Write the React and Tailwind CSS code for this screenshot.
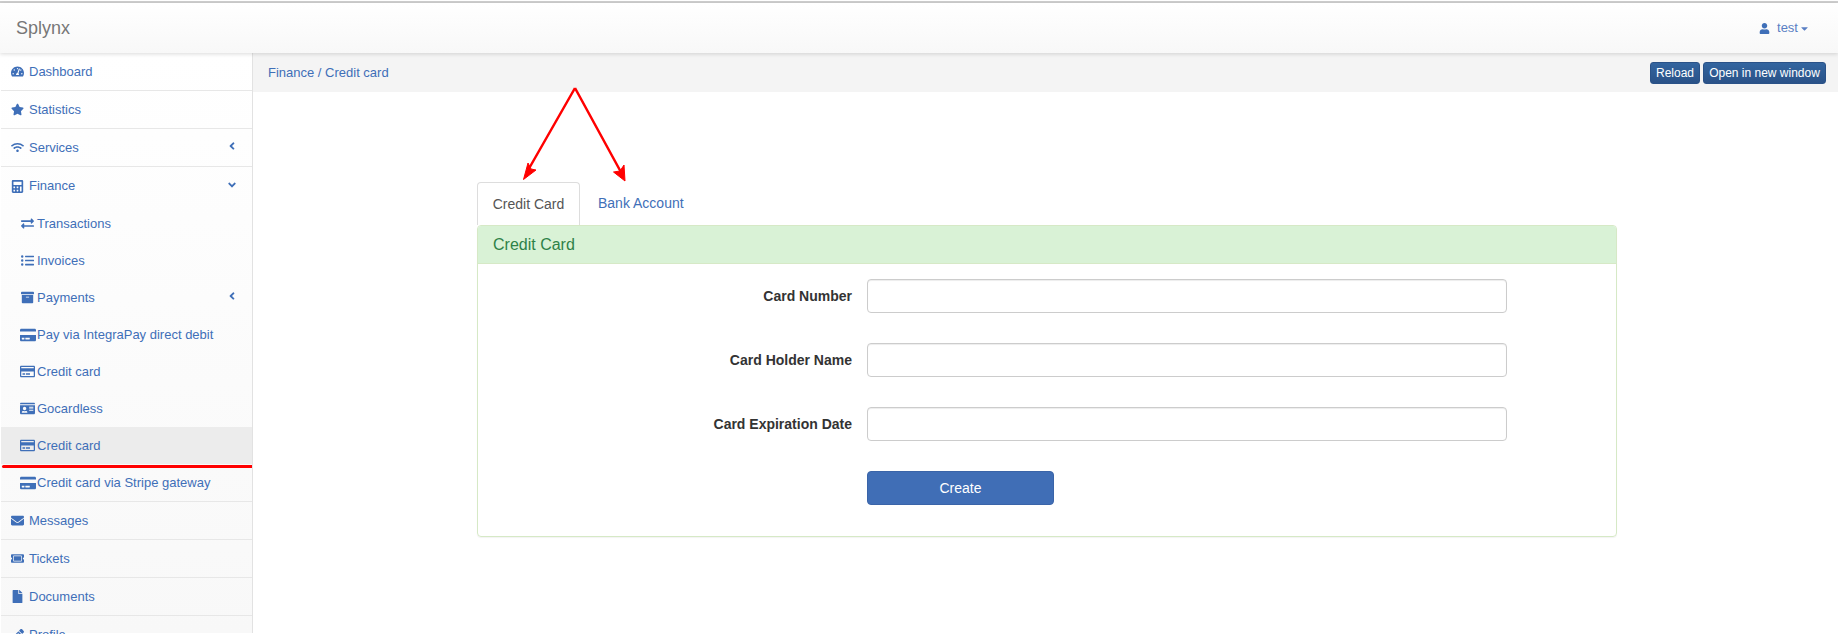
import React from "react";
import {
  FaTachometerAlt, FaStar, FaWifi, FaCalculator, FaExchangeAlt, FaListUl, FaArchive,
  FaCreditCard, FaRegCreditCard, FaIdCard, FaEnvelope, FaTicketAlt, FaFile, FaPencilAlt,
  FaUser, FaCaretDown, FaAngleLeft, FaAngleDown,
} from "react-icons/fa";

function TopRow({ icon: Icon, label, chevron, divider = true, iconSize = 13 }) {
  return (
    <div className={`h-[38px] flex items-center pl-[10px] pr-[14px] ${divider ? "border-b border-[#e7e7e7]" : ""}`}>
      <span className="w-[18px] flex justify-start shrink-0"><Icon size={iconSize} /></span>
      <span className="ml-[0px]">{label}</span>
      {chevron === "left" && <FaAngleLeft size={12} className="ml-auto mb-[3px]" />}
      {chevron === "down" && <FaAngleDown size={12} className="ml-auto mb-[3px]" />}
    </div>
  );
}

function SubRow({ icon: Icon, label, chevron, active, iconSize = 13 }) {
  return (
    <div className={`h-[37px] flex items-center pl-[17px] pr-[14px] ${active ? "bg-[#ececec]" : ""}`}>
      <span className="w-[19px] flex justify-center shrink-0"><Icon size={iconSize} /></span>
      <span>{label}</span>
      {chevron === "left" && <FaAngleLeft size={12} className="ml-auto mb-[3px]" />}
    </div>
  );
}

function Field({ label }) {
  return (
    <div className="flex items-center h-[34px] mb-[30px]">
      <label className="w-[374px] text-right font-bold text-[14px] text-[#333]">{label}</label>
      <input className="ml-[15px] w-[640px] h-[34px] border border-[#ccc] rounded-[4px] bg-white shadow-[inset_0_1px_1px_rgba(0,0,0,0.075)]" />
    </div>
  );
}

export default function App() {
  return (
    <div className="relative w-[1838px] h-[634px] overflow-hidden bg-white font-['Liberation_Sans',Arial,sans-serif] text-[13px] text-[#3f6fb8]">
      <div className="h-[2px] mt-[1px] bg-[#cfcfcf]" />
      <header className="h-[50px] flex items-center justify-between pl-[16px] pr-[16px] bg-gradient-to-b from-white to-[#f8f8f8] shadow-[0_1px_4px_rgba(0,0,0,0.15)] relative z-10">
        <span className="text-[18px] text-[#777]">Splynx</span>
        <span className="flex items-center text-[#5a7fc4] pr-[12px]">
          <FaUser size={11} className="text-[#3f6fb8] mr-[7px]" />
          test
          <FaCaretDown size={11} className="ml-[1px]" />
        </span>
      </header>
      <div className="flex h-[580px]">
        <aside className="w-[252px] ml-[1px] shrink-0 border-r border-[#e2e2e2] bg-gradient-to-b from-white to-[#f8f8f8]">
          <TopRow icon={FaTachometerAlt} label="Dashboard" />
          <TopRow icon={FaStar} label="Statistics" />
          <TopRow icon={FaWifi} label="Services" chevron="left" />
          <TopRow icon={FaCalculator} label="Finance" chevron="down" divider={false} />
          <SubRow icon={FaExchangeAlt} label="Transactions" />
          <SubRow icon={FaListUl} label="Invoices" />
          <SubRow icon={FaArchive} label="Payments" chevron="left" />
          <SubRow icon={FaCreditCard} label="Pay via IntegraPay direct debit" iconSize={16} />
          <SubRow icon={FaRegCreditCard} label="Credit card" iconSize={15} />
          <SubRow icon={FaIdCard} label="Gocardless" iconSize={15} />
          <SubRow icon={FaRegCreditCard} label="Credit card" iconSize={15} active />
          <div className="border-b border-[#e7e7e7]">
            <SubRow icon={FaCreditCard} label="Credit card via Stripe gateway" iconSize={16} />
          </div>
          <TopRow icon={FaEnvelope} label="Messages" />
          <TopRow icon={FaTicketAlt} label="Tickets" />
          <TopRow icon={FaFile} label="Documents" />
          <TopRow icon={FaPencilAlt} label="Profile" divider={false} />
        </aside>
        <main className="flex-1 min-w-0">
          <div className="h-[39px] bg-[#f4f4f4] flex items-center justify-between pl-[15px] pr-[12px]">
            <span>Finance / Credit card</span>
            <div className="flex gap-[3px]">
              <button className="h-[22px] w-[50px] rounded-[3px] border border-[#2a5288] bg-gradient-to-b from-[#33659f] to-[#2a5288] text-white text-[12px]">Reload</button>
              <button className="h-[22px] w-[123px] rounded-[3px] border border-[#2a5288] bg-gradient-to-b from-[#33659f] to-[#2a5288] text-white text-[12px]">Open in new window</button>
            </div>
          </div>
          <div className="ml-[224px] w-[1140px] mt-[90px]">
            <div className="flex h-[43px] text-[14px]">
              <div className="w-[103px] h-[43px] flex items-center justify-center bg-white border border-[#ddd] border-b-0 rounded-t-[4px] text-[#555]">Credit Card</div>
              <div className="pl-[18px] flex items-center pb-[1px]">Bank Account</div>
            </div>
            <section className="h-[312px] border border-[#d6e9c6] rounded-[4px] shadow-[0_1px_1px_rgba(0,0,0,0.05)]">
              <div className="h-[38px] bg-[#d9f2d6] border-b border-[#d6e9c6] rounded-t-[3px] flex items-center pl-[15px] text-[16px] text-[#2e8148]">Credit Card</div>
              <div className="pt-[15px]">
                <Field label="Card Number" />
                <Field label="Card Holder Name" />
                <Field label="Card Expiration Date" />
                <button className="ml-[389px] w-[187px] h-[34px] bg-[#406eb6] border border-[#3a64a8] rounded-[4px] text-white text-[14px]">Create</button>
              </div>
            </section>
          </div>
        </main>
      </div>

      <div className="absolute left-[2px] top-[465px] w-[250px] h-[3px] bg-[#f00] rounded-l-[2px]" />
      <svg className="absolute left-0 top-0 pointer-events-none" width="1838" height="634" viewBox="0 0 1838 634">
        <path d="M575 88 L527 172 M575 88 L622 174" stroke="#f00" strokeWidth="2.5" fill="none" />
        <path d="M523.5 179.5 L528 163 L531 169 L536 170 Z" fill="#f00" stroke="#f00" strokeWidth="1" />
        <path d="M625 181 L613.5 172 L620 171 L624 165 Z" fill="#f00" stroke="#f00" strokeWidth="1" />
      </svg>
    </div>
  );
}
